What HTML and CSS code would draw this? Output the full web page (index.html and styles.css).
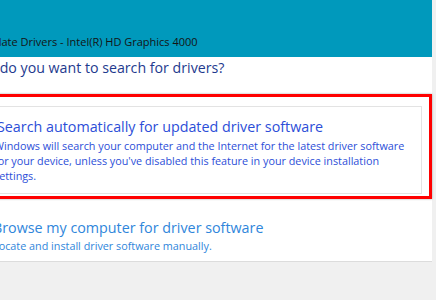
FILE: index.html
```html
<!DOCTYPE html>
<html lang="en">
<head>
    <meta charset="UTF-8">
    <meta name="viewport" content="width=device-width, initial-scale=1.0">
    <title>Update Drivers</title>
    <link rel="stylesheet" href="styles.css">
</head>
<body>
    <div class="window">
        <div class="titlebar">
            <span class="title">Update Drivers - Intel(R) HD Graphics 4000</span>
        </div>
        <div class="content">
            <h1 class="instruction">How do you want to search for drivers?</h1>

            <div class="highlight">
                <div class="choice choice-hover">
                    <div class="choice-title">Search automatically for updated driver software</div>
                    <p class="choice-desc">Windows will search your computer and the Internet for the latest driver software for your device, unless you've disabled this feature in your device installation settings.</p>
                </div>
            </div>

            <div class="choice choice-plain">
                <div class="choice-title">Browse my computer for driver software</div>
                <p class="choice-desc">Locate and install driver software manually.</p>
            </div>
        </div>
        <div class="footer"></div>
    </div>
</body>
</html>
```

FILE: styles.css
```css
body {
    margin: 0;
    width: 436px;
    height: 300px;
    overflow: hidden;
    background-color: #f0f0f0;
    font-family: "Open Sans", "Noto Sans", sans-serif;
}
.window {
    margin-left: -60px;
    width: 492px;
}
.titlebar {
    height: 57px;
    background-color: #0099bc;
    display: flex;
    align-items: flex-end;
    box-sizing: border-box;
    padding: 0 0 7px 40px;
}
.title {
    font-size: 11px;
    color: #141414;
    line-height: 16px;
}
.content {
    background-color: #fff;
    padding: 1px 0 0 0;
    border-bottom: 1px solid #dcdcdc;
}
.instruction {
    margin: 0 0 0 26px;
    font-size: 14.2px;
    font-weight: normal;
    color: #1e3a8e;
    line-height: 20px;
}
.highlight {
    margin: 16px 0 0 30px;
    border: 3px solid #f00;
    box-shadow: 0 0 2px rgba(0, 0, 0, 0.35);
    padding: 9px 7px 2px 12px;
}
.choice-hover {
    border: 1px solid #e3e3e3;
    padding: 11px 0 10px 11px;
}
.choice-title {
    font-size: 14.3px;
    line-height: 18px;
    color: #2c4ed8;
}
.choice-desc {
    margin: 2px 0 0 0;
    font-size: 10.8px;
    line-height: 15px;
    color: #2c4ed8;
}
.choice-hover .choice-desc {
    margin-left: -3px;
}
.choice-plain {
    margin: 0 0 0 53px;
    padding: 20px 0 8px 0;
}
.choice-plain .choice-desc {
    margin-top: 1px;
}
.choice-plain .choice-title,
.choice-plain .choice-desc {
    color: #2f86db;
}
.footer {
    height: 40px;
}
```
